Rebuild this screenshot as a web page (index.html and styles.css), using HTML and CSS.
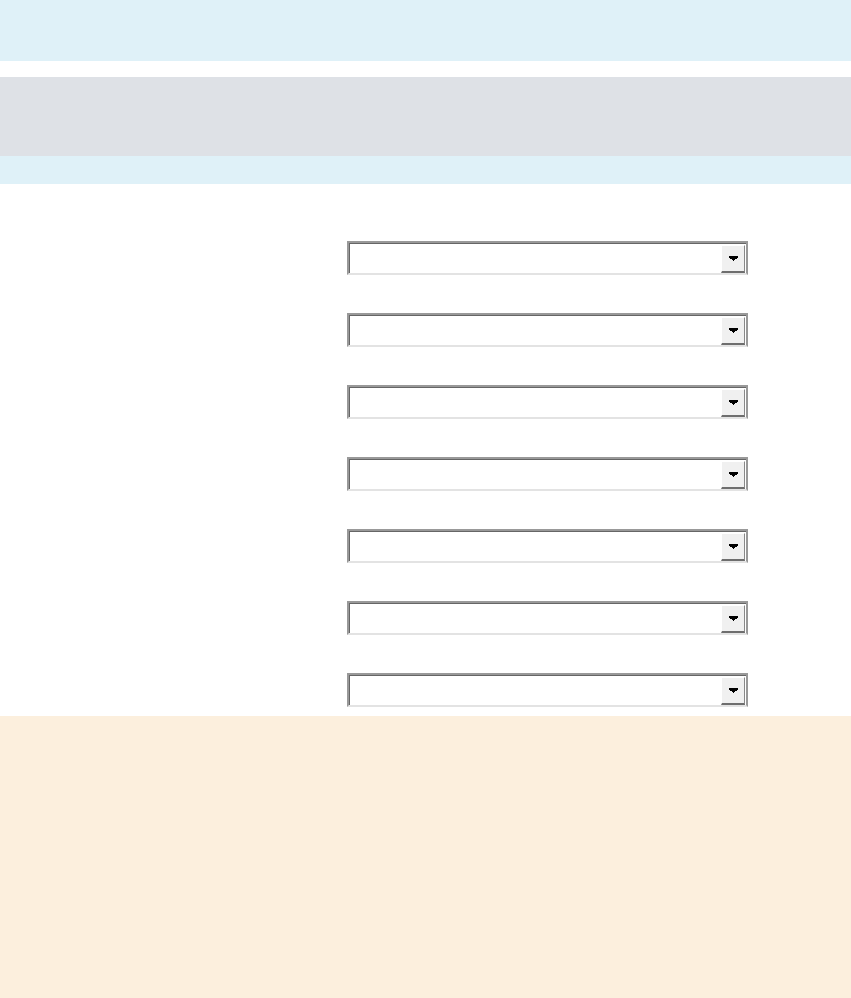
FILE: index.html
```html
<!DOCTYPE html>
<html>
<head>
<meta charset="utf-8">
<link rel="stylesheet" href="styles.css">
</head>
<body>
<div class="band-top"></div>
<div class="band-gray"></div>
<div class="band-blue"></div>
<main class="form">
  <div class="select"><span class="btn"><svg class="arrow" width="9" height="5" viewBox="0 0 9 5"><path d="M0 0h9v2h-1v1h-2v1h-1v1h-1v-1h-1v-1h-2v-1h-1z"/></svg></span></div>
  <div class="select"><span class="btn"><svg class="arrow" width="9" height="5" viewBox="0 0 9 5"><path d="M0 0h9v2h-1v1h-2v1h-1v1h-1v-1h-1v-1h-2v-1h-1z"/></svg></span></div>
  <div class="select"><span class="btn"><svg class="arrow" width="9" height="5" viewBox="0 0 9 5"><path d="M0 0h9v2h-1v1h-2v1h-1v1h-1v-1h-1v-1h-2v-1h-1z"/></svg></span></div>
  <div class="select"><span class="btn"><svg class="arrow" width="9" height="5" viewBox="0 0 9 5"><path d="M0 0h9v2h-1v1h-2v1h-1v1h-1v-1h-1v-1h-2v-1h-1z"/></svg></span></div>
  <div class="select"><span class="btn"><svg class="arrow" width="9" height="5" viewBox="0 0 9 5"><path d="M0 0h9v2h-1v1h-2v1h-1v1h-1v-1h-1v-1h-2v-1h-1z"/></svg></span></div>
  <div class="select"><span class="btn"><svg class="arrow" width="9" height="5" viewBox="0 0 9 5"><path d="M0 0h9v2h-1v1h-2v1h-1v1h-1v-1h-1v-1h-2v-1h-1z"/></svg></span></div>
  <div class="select"><span class="btn"><svg class="arrow" width="9" height="5" viewBox="0 0 9 5"><path d="M0 0h9v2h-1v1h-2v1h-1v1h-1v-1h-1v-1h-2v-1h-1z"/></svg></span></div>
</main>
<footer class="band-footer"></footer>
</body>
</html>
```

FILE: styles.css
```css
html, body {
  margin: 0;
  padding: 0;
  background: #fff;
  font-family: "Liberation Sans", Arial, sans-serif;
}
.band-top {
  height: 61px;
  background: #dff1f8;
}
.band-gray {
  margin-top: 16px;
  height: 79px;
  background: #dee1e6;
}
.band-blue {
  height: 28px;
  background: #dff1f8;
}
.form {
  display: flex;
  flex-direction: column;
  gap: 38px;
  padding: 57px 0 9px 347px;
}
.select {
  display: flex;
  justify-content: flex-end;
  width: 401px;
  height: 34px;
  box-sizing: border-box;
  border-top: 2px solid #999;
  border-left: 2px solid #999;
  border-right: 2px solid #999;
  border-bottom: 2px solid #e3e3e3;
  background: #fff;
  box-shadow: inset 1px 1px 0 #666;
}
.btn {
  display: flex;
  align-items: center;
  justify-content: center;
  width: 24px;
  height: 28px;
  margin-top: 2px;
  margin-right: 1px;
  box-sizing: border-box;
  background: #f0f0f0;
  border-top: 1px solid #fff;
  border-left: 1px solid #fff;
  border-right: 1px solid #888;
  border-bottom: 2px solid #6e6e6e;
}
.arrow {
  display: block;
  fill: #000;
  shape-rendering: crispEdges;
}
.band-footer {
  height: 282px;
  background: #fcefdd;
}
```
